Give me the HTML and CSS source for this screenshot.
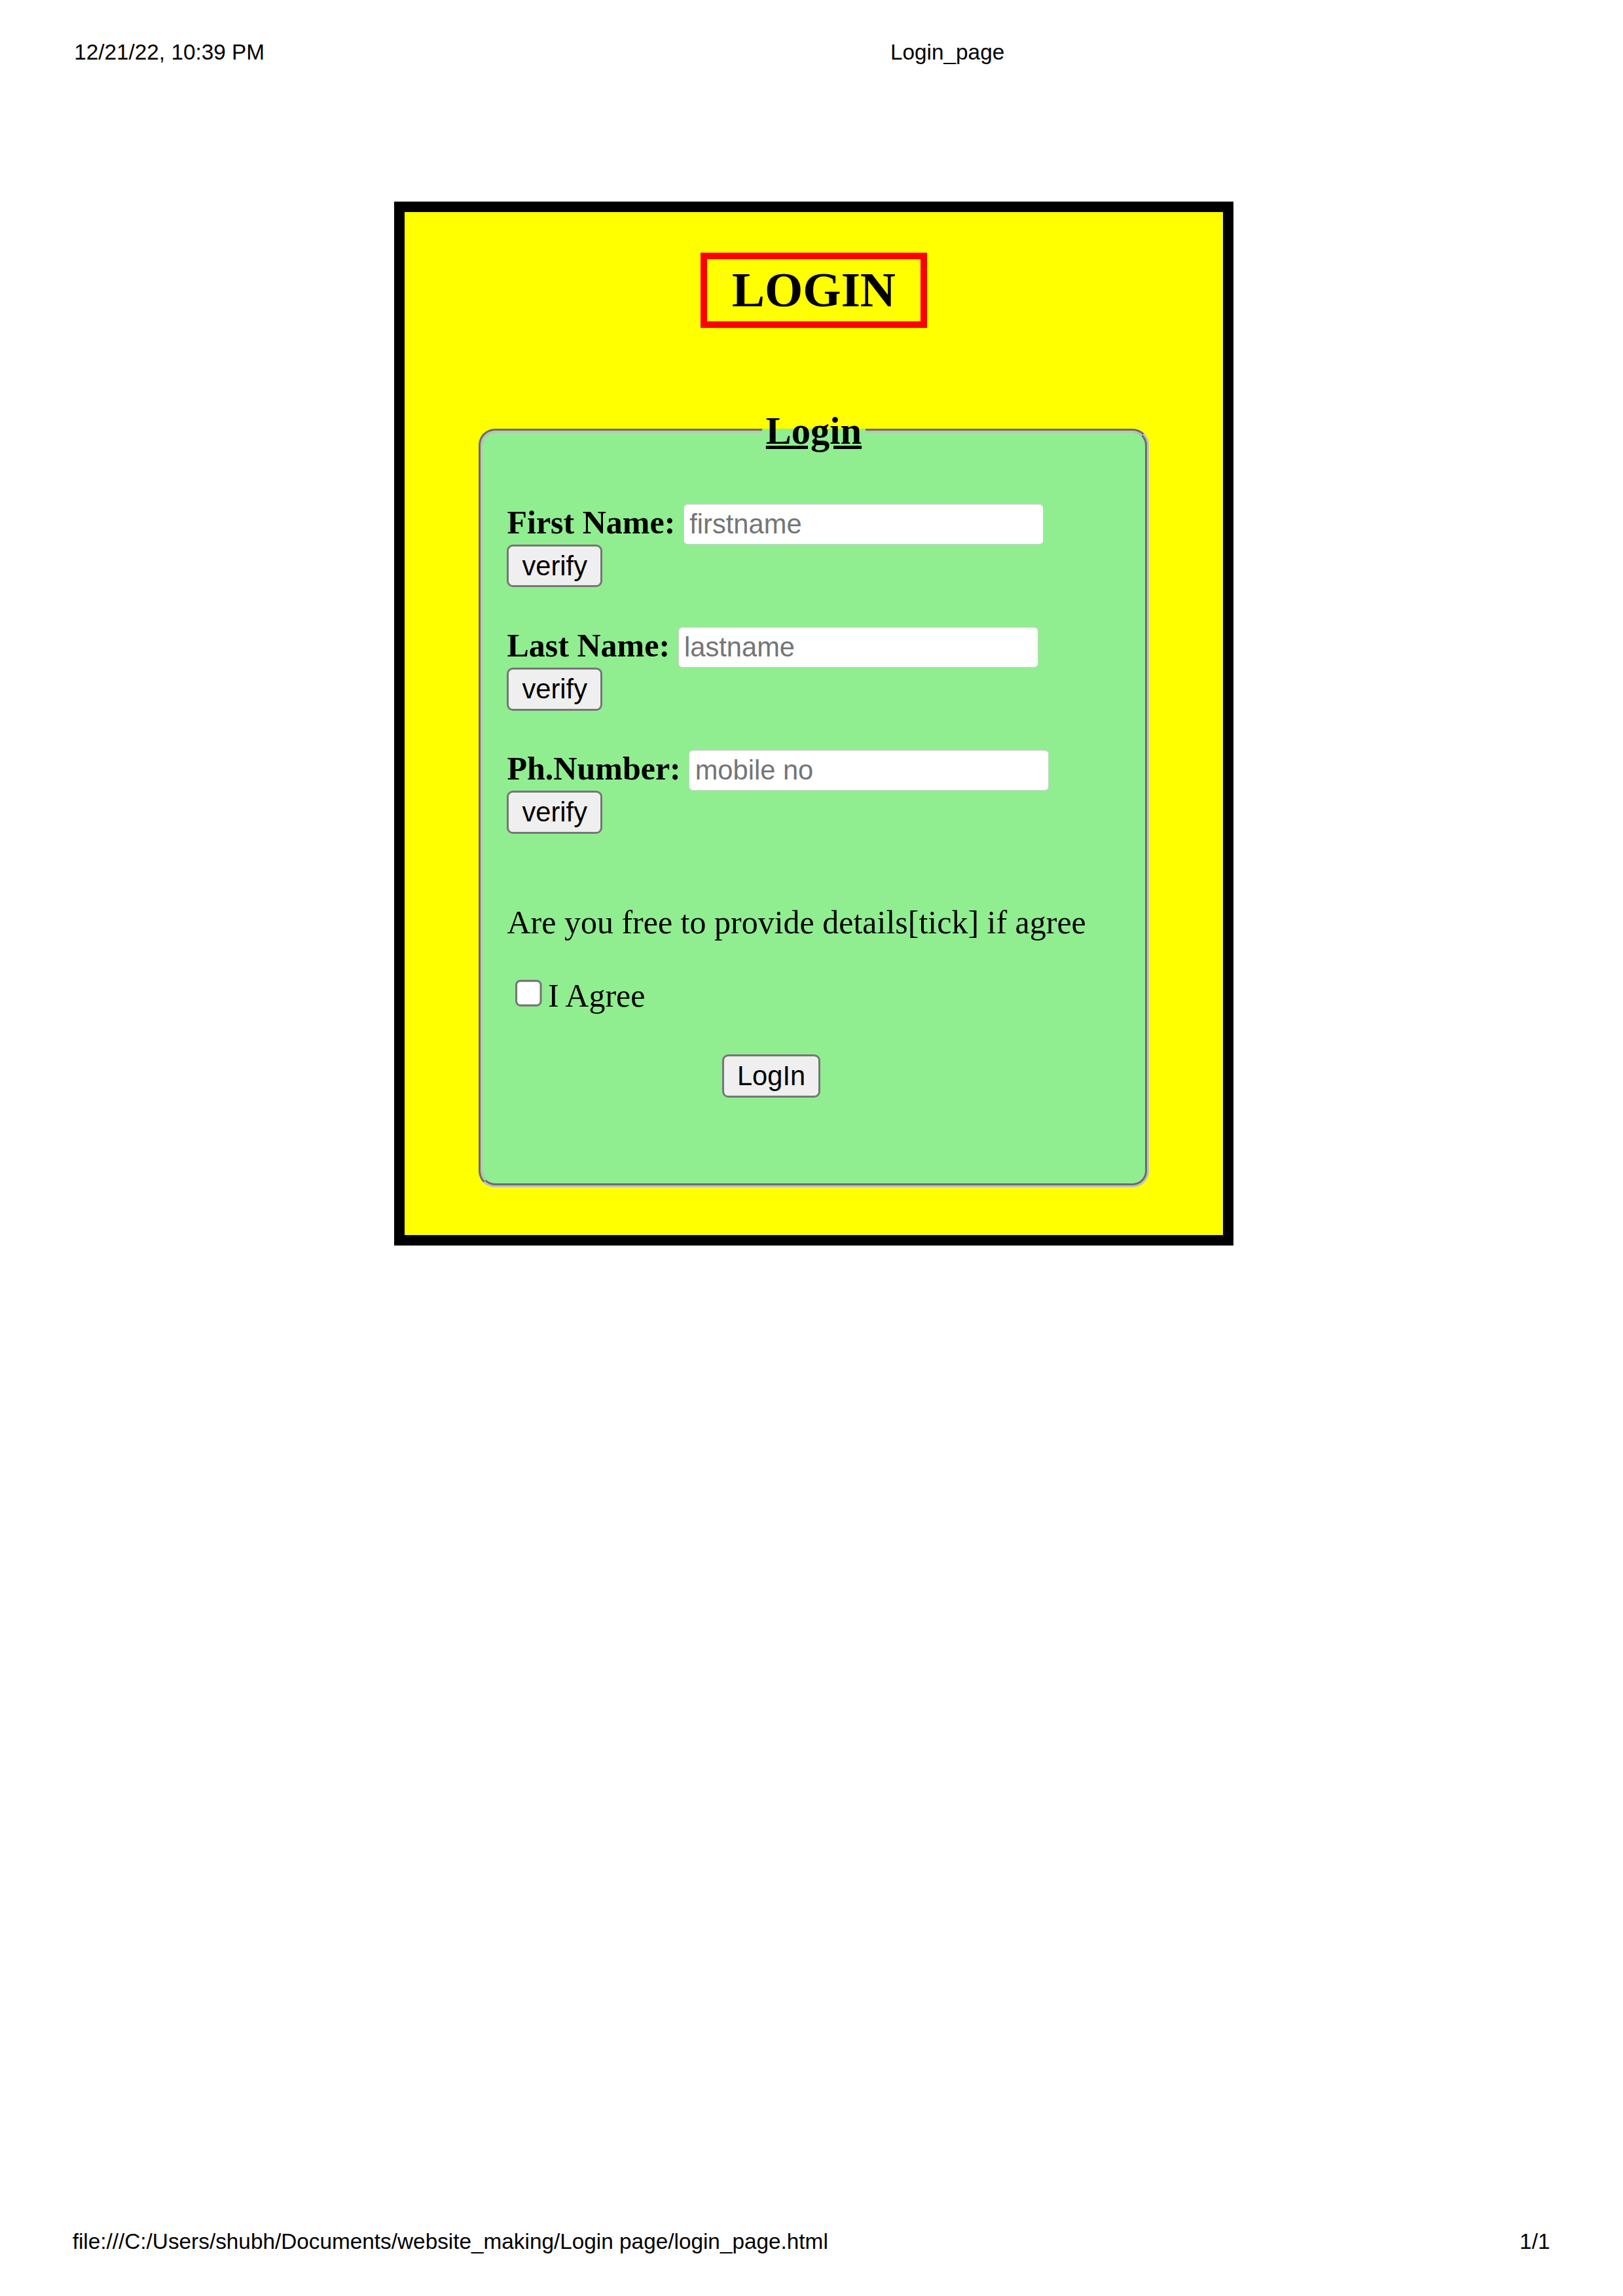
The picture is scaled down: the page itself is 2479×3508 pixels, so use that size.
FILE: index.html
```html
<!DOCTYPE html>
<html lang="en">
<head>
<meta charset="utf-8">
<title>Login_page</title>
<link rel="stylesheet" href="styles.css">
</head>
<body>
<header class="print-head">
  <span class="print-date">12/21/22, 10:39 PM</span>
  <span class="print-title">Login_page</span>
</header>
<main class="card">
  <div class="card-head"><h2 class="card-title">LOGIN</h2></div>
  <form class="login-form">
    <fieldset class="login-set">
      <legend class="login-legend">Login</legend>
      <div class="row row-first"><label class="lbl">First Name:</label> <input class="txt" type="text" placeholder="firstname"> <button type="button" class="btn">verify</button></div>
      <div class="row"><label class="lbl">Last Name:</label> <input class="txt" type="text" placeholder="lastname"> <button type="button" class="btn">verify</button></div>
      <div class="row"><label class="lbl">Ph.Number:</label> <input class="txt" type="text" placeholder="mobile no"> <button type="button" class="btn">verify</button></div>
      <p class="question">Are you free to provide details[tick] if agree</p>
      <p class="agree"><input type="checkbox" class="chk">I Agree</p>
      <div class="submit-row"><button type="button" class="btn">LogIn</button></div>
    </fieldset>
  </form>
</main>
<footer class="print-foot">
  <span>file:///C:/Users/shubh/Documents/website_making/Login page/login_page.html</span>
  <span>1/1</span>
</footer>
</body>
</html>
```
FILE: styles.css
```css
html {
  zoom: 3.125;
  background: #fff;
}

body {
  margin: 0;
  min-height: 1122.56px;
  display: flex;
  flex-direction: column;
  font-family: "Liberation Serif", "Times New Roman", serif;
  font-size: 16px;
  color: #000;
}

.print-head {
  display: flex;
  padding: 19.6px 0 0 36.2px;
  font-family: "Liberation Sans", Arial, sans-serif;
  font-size: 10.667px;
  line-height: 12.26px;
}

.print-date {
  width: 399px;
}

.card {
  box-sizing: content-box;
  width: 400px;
  height: 500px;
  border: 5.12px solid #000;
  background: #ff0;
  margin: 66.7px 0 0 192.64px;
}

.card-head {
  display: flex;
  justify-content: center;
  padding-top: 19.8px;
}

.card-title {
  margin: 0;
  font-size: 24px;
  font-weight: bold;
  line-height: 27.6px;
  padding: 1.45px 12px;
  border: 3.2px solid #f00;
}

.login-form {
  margin: 0;
}

.login-set {
  box-sizing: border-box;
  width: 327.7px;
  margin: 39.55px auto 0;
  padding: 0 12px 41.7px;
  border: 2px groove #c0c0c0;
  border-radius: 8px;
  background: #90ee90;
}

.login-legend {
  margin: 0 auto;
  padding: 0 2px;
  font-size: 18.72px;
  font-weight: bold;
  text-decoration: underline;
}

.row {
  margin-bottom: 19.05px;
}

.row-first {
  margin-top: 24.6px;
}

.lbl {
  font-weight: bold;
}

.txt {
  box-sizing: border-box;
  width: 176px;
  height: 19.8px;
  margin: 0;
  padding: 1px 2.7px;
  border: 0.32px solid #cfcfcf;
  border-radius: 2px;
  background: #fff;
  font-family: "Liberation Sans", Arial, sans-serif;
  font-size: 13.333px;
  color: #000;
}

.txt::placeholder {
  color: #757575;
}

.btn {
  margin: 0;
  padding: 1.9px 6.4px;
  border: 1px solid #767676;
  border-radius: 3px;
  background: #efefef;
  color: #000;
  font-family: "Liberation Sans", Arial, sans-serif;
  font-size: 13.333px;
  line-height: normal;
}

.question {
  margin: 33.9px 0 0;
}

.agree {
  margin: 16px 0;
}

.chk {
  width: 13px;
  height: 13px;
  margin: 3px 3px 3px 4px;
}

.submit-row {
  margin-top: 19.6px;
  padding-left: 105.1px;
}

.print-foot {
  margin-top: auto;
  display: flex;
  justify-content: space-between;
  padding: 0 35.7px 20.3px 35.4px;
  font-family: "Liberation Sans", Arial, sans-serif;
  font-size: 10.667px;
  line-height: 12.26px;
}
```
